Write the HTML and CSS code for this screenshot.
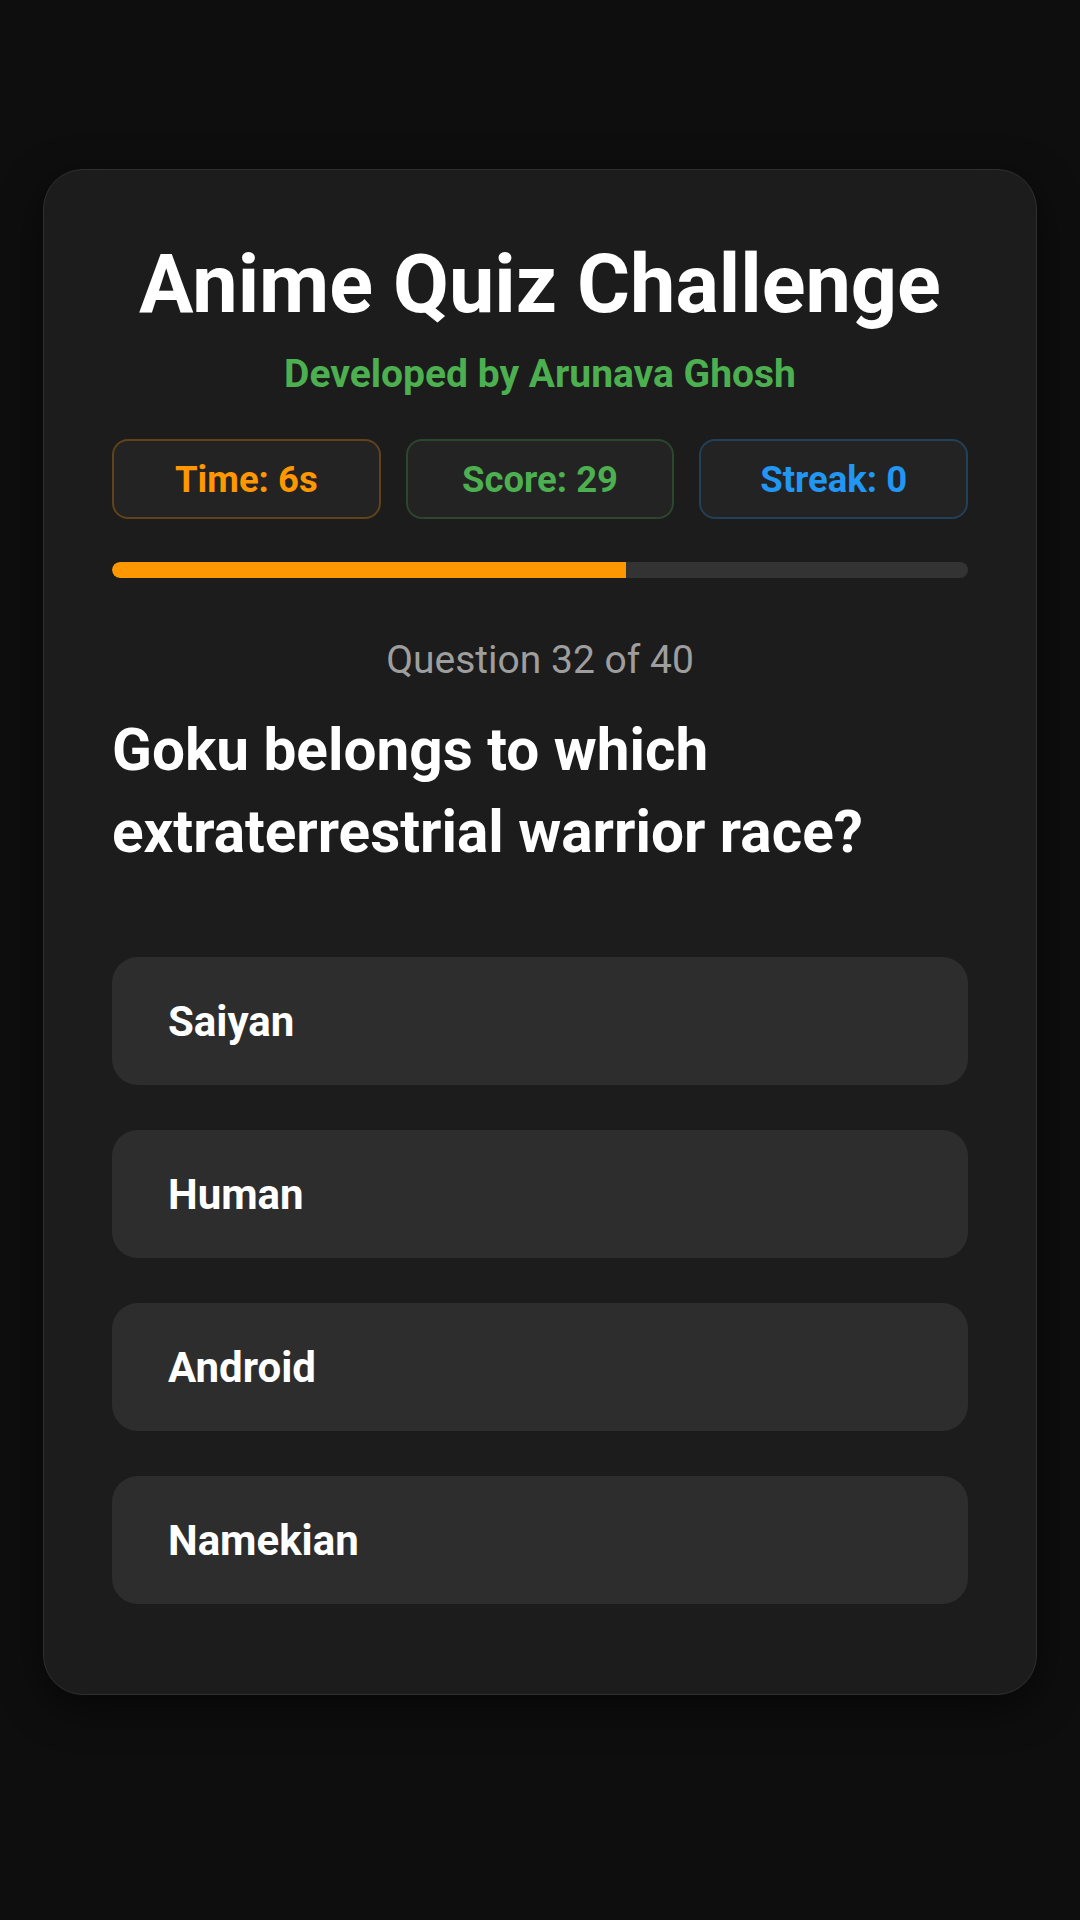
FILE: index.html
```html
<!DOCTYPE html>
<html lang="en">
<head>
<meta charset="utf-8">
<title>Anime Quiz Challenge</title>
<link rel="stylesheet" href="styles.css">
</head>
<body>
  <main class="quiz-card">
    <h1 class="quiz-title">Anime Quiz Challenge</h1>
    <p class="quiz-credit">Developed by Arunava Ghosh</p>

    <div class="stats">
      <div class="stat stat-time">Time: 6s</div>
      <div class="stat stat-score">Score: 29</div>
      <div class="stat stat-streak">Streak: 0</div>
    </div>

    <div class="timer-track">
      <div class="timer-fill" style="width: 60%"></div>
    </div>

    <p class="question-count">Question 32 of 40</p>
    <h2 class="question-text">Goku belongs to which extraterrestrial warrior race?</h2>

    <div class="options">
      <button class="option">Saiyan</button>
      <button class="option">Human</button>
      <button class="option">Android</button>
      <button class="option">Namekian</button>
    </div>
  </main>
</body>
</html>
```

FILE: styles.css
```css
* {
  box-sizing: border-box;
}

html, body {
  margin: 0;
  padding: 0;
}

body {
  background: #0e0e0e;
  font-family: Roboto, "Noto Sans", "Liberation Sans", sans-serif;
  color: #ffffff;
  min-height: 1920px;
  padding: 169px 43px 0;
}

.quiz-card {
  background: #1c1c1c;
  border: 1px solid #2f2f2f;
  border-radius: 40px;
  padding: 67px 68px 90px;
  box-shadow: 0 12px 40px rgba(0, 0, 0, 0.55);
}

.quiz-title {
  margin: 0;
  text-align: center;
  font-size: 81px;
  font-weight: 700;
  line-height: 96px;
  color: #ffffff;
}

.quiz-credit {
  margin: 18px 0 0;
  text-align: center;
  font-size: 39px;
  font-weight: 700;
  line-height: 46px;
  color: #4caf50;
}

.stats {
  display: grid;
  grid-template-columns: repeat(3, 1fr);
  gap: 25px;
  margin-top: 42px;
}

.stat {
  height: 80px;
  display: flex;
  align-items: center;
  justify-content: center;
  background: #232323;
  border: 2px solid transparent;
  border-radius: 16px;
  font-size: 36.5px;
  font-weight: 700;
}

.stat-time {
  color: #ff9800;
  border-color: rgba(255, 152, 0, 0.28);
}

.stat-score {
  color: #4caf50;
  border-color: rgba(76, 175, 80, 0.25);
}

.stat-streak {
  color: #2196f3;
  border-color: rgba(33, 150, 243, 0.25);
}

.timer-track {
  margin-top: 43px;
  height: 16px;
  border-radius: 8px;
  background: #333333;
  overflow: hidden;
}

.timer-fill {
  height: 100%;
  background: #ff9800;
  border-radius: 8px 0 0 8px;
}

.question-count {
  margin: 59px 0 0;
  text-align: center;
  font-size: 39px;
  font-weight: 400;
  line-height: 46px;
  color: #9e9e9e;
}

.question-text {
  margin: 26px 0 0;
  font-size: 58.5px;
  font-weight: 700;
  line-height: 82px;
  color: #ffffff;
}

.options {
  display: flex;
  flex-direction: column;
  gap: 45px;
  margin-top: 84px;
}

.option {
  height: 128px;
  padding: 0 56px;
  display: flex;
  align-items: center;
  background: #2d2d2d;
  border: none;
  border-radius: 26px;
  font-family: inherit;
  font-size: 42px;
  font-weight: 700;
  color: #ffffff;
  text-align: left;
}
```
